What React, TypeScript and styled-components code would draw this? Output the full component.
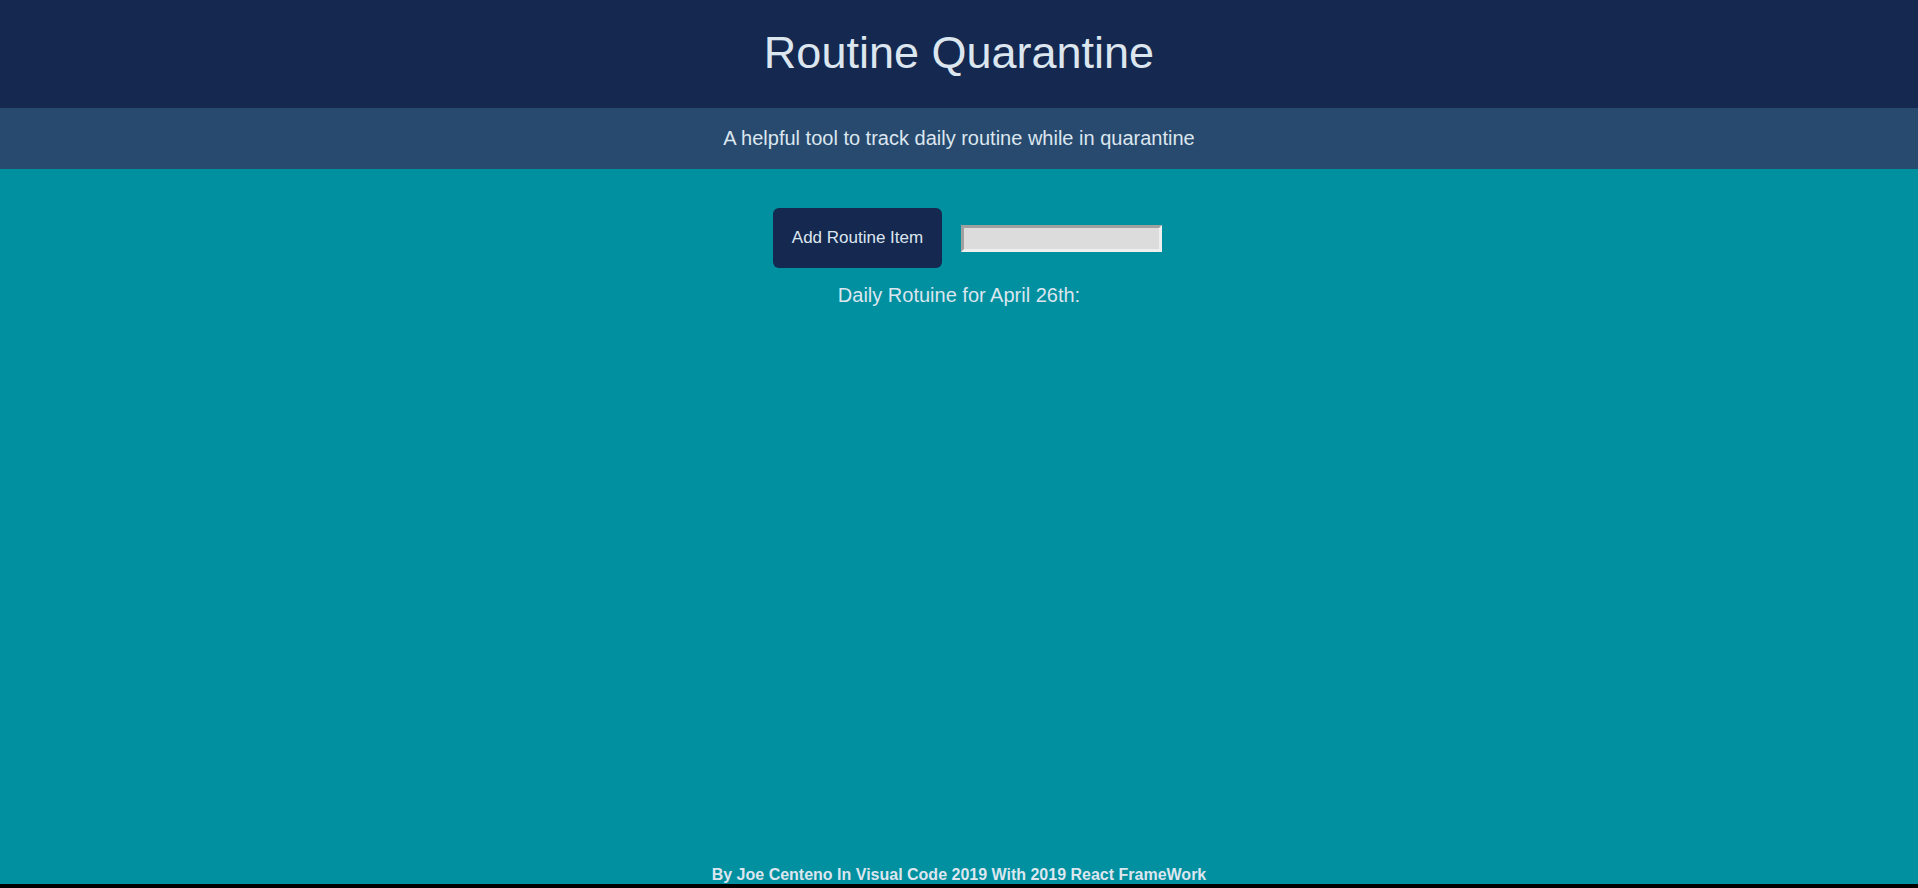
import React, { useState } from 'react';
import styled, { createGlobalStyle } from 'styled-components';

const GlobalStyle = createGlobalStyle`
  html, body {
    margin: 0;
    padding: 0;
    background: #00909f;
  }

  * {
    box-sizing: border-box;
  }

  body {
    font-family: "Liberation Sans", Arial, sans-serif;
    color: #dce6ef;
  }
`;

const Page = styled.div`
  min-height: 100vh;
  display: flex;
  flex-direction: column;
  background: #00909f;
`;

const Header = styled.header`
  height: 108px;
  padding-top: 27px;
  background: #152850;
  text-align: center;
`;

const Title = styled.h1`
  margin: 0;
  font-size: 45px;
  font-weight: normal;
  line-height: normal;
  color: #dce6ef;
`;

const SubHeader = styled.div`
  height: 61px;
  padding-top: 19px;
  background: #274a6e;
  text-align: center;
  font-size: 20px;
`;

const Main = styled.main`
  flex: 1;
  display: flex;
  flex-direction: column;
  align-items: center;
  padding-top: 39px;
`;

const Controls = styled.div`
  display: flex;
  align-items: center;
  gap: 19px;
  padding-left: 17px;
`;

const AddButton = styled.button`
  height: 60px;
  padding: 0 19px;
  border: none;
  border-radius: 6px;
  background: #15284f;
  color: #dce6ef;
  font-family: "Liberation Sans", Arial, sans-serif;
  font-size: 17px;
  cursor: pointer;
`;

const ItemInput = styled.input`
  width: 201px;
  height: 27px;
  padding: 0 4px;
  border-style: solid;
  border-width: 3px;
  border-color: #a0a0a0 #efefef #efefef #a0a0a0;
  background: #dcdcdc;
  font-family: "Liberation Sans", Arial, sans-serif;
  font-size: 14px;
  outline: none;
`;

const DayLabel = styled.div`
  margin-top: 16px;
  font-size: 20px;
`;

const RoutineList = styled.ul`
  margin: 8px 0 0;
  padding: 0;
  list-style: none;
  font-size: 18px;
  text-align: center;
`;

const Footer = styled.footer`
  height: 18px;
  line-height: 18px;
  text-align: center;
  font-size: 16px;
  font-weight: bold;
`;

const BottomBar = styled.div`
  height: 4px;
  background: #000;
`;

export default function App() {
  const [text, setText] = useState('');
  const [items, setItems] = useState<string[]>([]);

  const addItem = () => {
    if (!text.trim()) return;
    setItems([...items, text.trim()]);
    setText('');
  };

  return (
    <>
      <GlobalStyle />
      <Page>
        <Header>
          <Title>Routine Quarantine</Title>
        </Header>
        <SubHeader>A helpful tool to track daily routine while in quarantine</SubHeader>
        <Main>
          <Controls>
            <AddButton onClick={addItem}>Add Routine Item</AddButton>
            <ItemInput value={text} onChange={e => setText(e.target.value)} />
          </Controls>
          <DayLabel>Daily Rotuine for April 26th:</DayLabel>
          {items.length > 0 && (
            <RoutineList>
              {items.map((item, i) => <li key={i}>{item}</li>)}
            </RoutineList>
          )}
        </Main>
        <Footer>By Joe Centeno In Visual Code 2019 With 2019 React FrameWork</Footer>
        <BottomBar />
      </Page>
    </>
  );
}
